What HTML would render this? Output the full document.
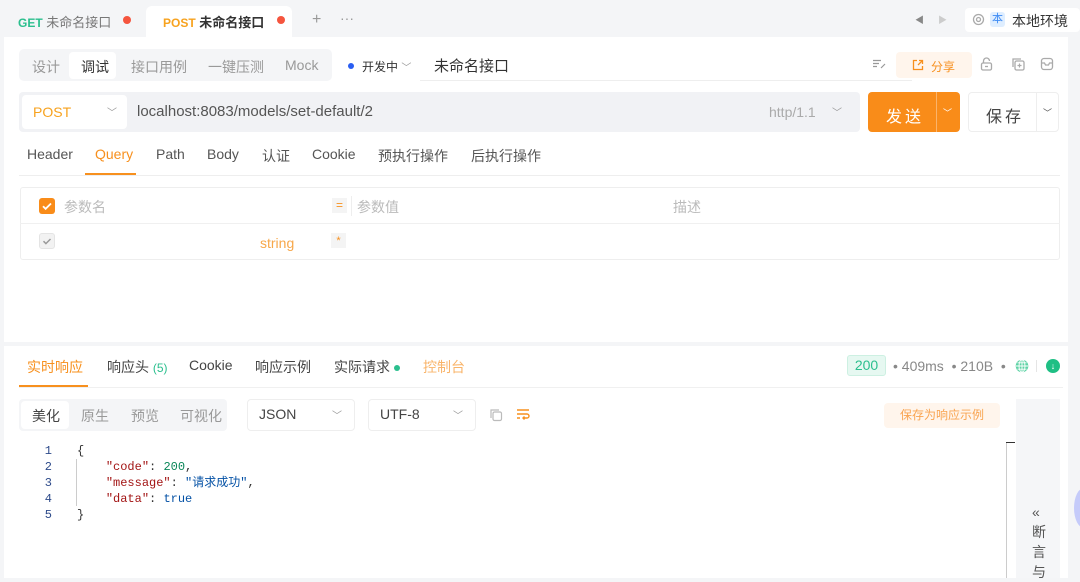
<!DOCTYPE html>
<html><head><meta charset="utf-8"><style>
*{box-sizing:border-box;margin:0;padding:0}
body{width:1080px;height:578px;overflow:hidden;background:#f4f5f7;font-family:"Liberation Sans","Noto Sans CJK SC",sans-serif;font-size:14px;color:#333;position:relative}
.a{position:absolute;white-space:nowrap}
.g{color:#999}
.o{color:#f7901e}
</style></head><body>
<!-- top tabs -->
<div class="a" style="left:18px;top:12px;font-size:13px"><b style="color:#2bbf8e;font-size:12px">GET</b> <span style="color:#777">未命名接口</span></div>
<div class="a" style="left:123px;top:16px;width:8px;height:8px;border-radius:50%;background:#f5553e"></div>
<div class="a" style="left:146px;top:6px;width:146px;height:31px;background:#fff;border-radius:6px 6px 0 0"></div>
<div class="a" style="left:163px;top:12px;font-size:13px"><b style="color:#f7a21e;font-size:12px">POST</b> <b style="color:#333">未命名接口</b></div>
<div class="a" style="left:277px;top:16px;width:8px;height:8px;border-radius:50%;background:#f5553e"></div>
<div class="a g" style="left:312px;top:11px;font-size:16px">+</div>
<div class="a g" style="left:340px;top:10px">···</div>
<div class="a" style="left:915px;top:13px;font-size:9px;color:#888">◀</div>
<div class="a" style="left:938px;top:13px;font-size:9px;color:#ccc">▶</div>
<div class="a" style="left:965px;top:8px;width:115px;height:24px;background:#fff;border-radius:4px"></div>
<svg class="a" style="left:972px;top:13px" width="13" height="13" viewBox="0 0 13 13"><circle cx="6.5" cy="6.5" r="5" fill="none" stroke="#aaa" stroke-width="1.3"/><circle cx="6.5" cy="6.5" r="2" fill="none" stroke="#aaa" stroke-width="1.3"/></svg>
<div class="a" style="left:990px;top:12px;font-size:11px;background:#dfeeff;color:#3d8bf5;padding:0 2px;border-radius:3px;line-height:15px">本</div>
<div class="a" style="left:1012px;top:11px;font-size:14px;color:#333">本地环境</div>
<!-- main panel -->
<div class="a" style="left:4px;top:37px;width:1064px;height:305px;background:#fff"></div>
<div class="a" style="left:4px;top:346px;width:1064px;height:232px;background:#fff"></div>
<!-- mode tabs -->
<div class="a" style="left:19px;top:49px;width:313px;height:32px;background:#f4f5f7;border-radius:5px"></div>
<div class="a" style="left:69px;top:52px;width:47px;height:27px;background:#fff;border-radius:4px"></div>
<div class="a g" style="left:32px;top:57px">设计</div>
<div class="a" style="left:81px;top:57px;color:#333">调试</div>
<div class="a g" style="left:131px;top:57px">接口用例</div>
<div class="a g" style="left:208px;top:57px">一键压测</div>
<div class="a g" style="left:285px;top:57px">Mock</div>
<div class="a" style="left:348px;top:63px;width:6px;height:6px;border-radius:50%;background:#2a5ef2"></div>
<div class="a" style="left:362px;top:58px;font-size:12px">开发中 <span class="g" style="font-size:10px">﹀</span></div>
<div class="a" style="left:434px;top:55px;font-size:15px">未命名接口</div>
<div class="a" style="left:420px;top:80px;width:492px;height:1px;background:#eee"></div>
<svg class="a" style="left:872px;top:59px" width="14" height="10" viewBox="0 0 14 10"><path d="M1 1.5h8M1 4.5h6M1 7.5h4M9 9l4-4" stroke="#999" stroke-width="1.2" fill="none"/></svg>
<div class="a" style="left:896px;top:52px;width:76px;height:26px;background:#fff5ec;border-radius:4px"></div>
<svg class="a" style="left:912px;top:59px" width="12" height="12" viewBox="0 0 12 12"><path d="M5 1.5H1.5v9h9V7M7 1.5h3.5V5M10.5 1.5L6 6" stroke="#f7901e" stroke-width="1.3" fill="none"/></svg>
<div class="a" style="left:931px;top:58px;color:#f7901e;font-size:12px">分享</div>
<svg class="a" style="left:980px;top:57px" width="13" height="14" viewBox="0 0 13 14"><path d="M3.5 6V4a3 3 0 0 1 6 0" stroke="#aaa" stroke-width="1.3" fill="none"/><rect x="1.5" y="6" width="10" height="7" rx="1.5" stroke="#aaa" stroke-width="1.3" fill="none"/><path d="M5 9.5h3" stroke="#aaa" stroke-width="1.3"/></svg>
<svg class="a" style="left:1011px;top:57px" width="14" height="14" viewBox="0 0 14 14"><path d="M2 10V2h8" stroke="#aaa" stroke-width="1.3" fill="none"/><rect x="4" y="4" width="9" height="9" rx="1.5" stroke="#aaa" stroke-width="1.3" fill="none"/><path d="M8.5 6.5v4M6.5 8.5h4" stroke="#aaa" stroke-width="1.2"/></svg>
<svg class="a" style="left:1040px;top:57px" width="14" height="14" viewBox="0 0 14 14"><rect x="1.5" y="1.5" width="11" height="11" rx="2.5" stroke="#aaa" stroke-width="1.3" fill="none"/><path d="M1.5 6h3l1 2h3l1-2h3" stroke="#aaa" stroke-width="1.3" fill="none"/></svg>
<!-- url bar -->
<div class="a" style="left:19px;top:92px;width:841px;height:40px;background:#f1f2f5;border-radius:4px"></div>
<div class="a" style="left:22px;top:95px;width:105px;height:34px;background:#fff;border-radius:4px"></div>
<div class="a" style="left:33px;top:104px;color:#f7a21e;font-size:14px">POST</div>
<div class="a g" style="left:107px;top:104px;font-size:10px">﹀</div>
<div class="a" style="left:137px;top:103px;font-size:15px;color:#555">localhost:8083/models/set-default/2</div>
<div class="a" style="left:769px;top:104px;font-size:14px;color:#aaa">http/1.1</div>
<div class="a g" style="left:832px;top:104px;font-size:10px">﹀</div>
<div class="a" style="left:868px;top:92px;width:92px;height:40px;background:#f98c19;border-radius:4px"></div>
<div class="a" style="left:936px;top:92px;width:1px;height:40px;background:#fbb36a"></div>
<div class="a" style="left:886px;top:103px;color:#fff;font-size:16px;letter-spacing:3px">发送</div>
<div class="a" style="left:943px;top:106px;color:#fff;font-size:9px">﹀</div>
<div class="a" style="left:968px;top:92px;width:91px;height:40px;background:#fff;border:1px solid #eee;border-radius:4px"></div>
<div class="a" style="left:1036px;top:93px;width:1px;height:38px;background:#eee"></div>
<div class="a" style="left:986px;top:103px;font-size:16px;letter-spacing:3px;color:#444">保存</div>
<div class="a" style="left:1043px;top:106px;color:#555;font-size:9px">﹀</div>
<!-- param tabs -->
<div class="a" style="left:27px;top:146px;color:#555">Header</div>
<div class="a o" style="left:95px;top:146px">Query</div>
<div class="a" style="left:85px;top:173px;width:51px;height:2px;background:#f7901e"></div>
<div class="a" style="left:156px;top:146px;color:#555">Path</div>
<div class="a" style="left:207px;top:146px;color:#555">Body</div>
<div class="a" style="left:262px;top:146px;color:#555">认证</div>
<div class="a" style="left:312px;top:146px;color:#555">Cookie</div>
<div class="a" style="left:378px;top:146px;color:#555">预执行操作</div>
<div class="a" style="left:471px;top:146px;color:#555">后执行操作</div>
<div class="a" style="left:19px;top:175px;width:1041px;height:1px;background:#eee"></div>
<!-- table -->
<div class="a" style="left:20px;top:187px;width:1040px;height:73px;border:1px solid #eee;border-radius:3px"></div>
<div class="a" style="left:20px;top:223px;width:1040px;height:1px;background:#f0f0f0"></div>
<div class="a" style="left:39px;top:198px;width:16px;height:16px;background:#f98c19;border-radius:3px"></div>
<svg class="a" style="left:39px;top:198px" width="16" height="16" viewBox="0 0 16 16"><path d="M4 8.2l2.6 2.6L12 5.5" stroke="#fff" stroke-width="1.8" fill="none"/></svg>
<div class="a" style="left:64px;top:197px;color:#bbb">参数名</div>
<div class="a" style="left:332px;top:198px;width:15px;height:15px;background:#f4f4f4;color:#f7901e;font-size:12px;text-align:center;line-height:15px">=</div>
<div class="a" style="left:351px;top:196px;width:1px;height:20px;background:#eee"></div>
<div class="a" style="left:357px;top:197px;color:#bbb">参数值</div>
<div class="a" style="left:673px;top:197px;color:#bbb">描述</div>
<div class="a" style="left:39px;top:233px;width:16px;height:16px;background:#f2f2f2;border:1px solid #e4e4e4;border-radius:3px"></div>
<svg class="a" style="left:39px;top:233px" width="16" height="16" viewBox="0 0 16 16"><path d="M4.5 8.2l2.4 2.4L11.5 6" stroke="#999" stroke-width="1.5" fill="none"/></svg>
<div class="a" style="left:260px;top:235px;color:#f7a74a">string</div>
<div class="a" style="left:331px;top:233px;width:15px;height:15px;background:#f4f4f4;color:#f7901e;font-size:11px;text-align:center;line-height:17px">*</div>
<!-- response tabs -->
<div class="a" style="left:27px;top:357px;color:#f7901e">实时响应</div>
<div class="a" style="left:19px;top:385px;width:69px;height:2px;background:#f7901e"></div>
<div class="a" style="left:107px;top:357px;color:#444">响应头 <span style="color:#2bbf8e;font-size:12px">(5)</span></div>
<div class="a" style="left:189px;top:357px;color:#444">Cookie</div>
<div class="a" style="left:255px;top:357px;color:#444">响应示例</div>
<div class="a" style="left:334px;top:357px;color:#444">实际请求</div>
<div class="a" style="left:394px;top:365px;width:6px;height:6px;border-radius:50%;background:#2bbf8e"></div>
<div class="a" style="left:423px;top:357px;color:#f9b46a">控制台</div>
<div class="a" style="left:19px;top:387px;width:1044px;height:1px;background:#f0f0f0"></div>
<div class="a" style="left:847px;top:355px;width:39px;height:21px;background:#e6f8f1;border:1px solid #cdf0e2;border-radius:3px;color:#2bbf8e;text-align:center;line-height:19px">200</div>
<div class="a" style="left:893px;top:358px;color:#888">• 409ms &nbsp;• 210B &nbsp;•</div>
<svg class="a" style="left:1015px;top:359px" width="14" height="14" viewBox="0 0 14 14"><circle cx="7" cy="7" r="6.3" fill="#5fd3a6"/><path d="M1 7h12M7 1v12M2.5 3.8h9M2.5 10.2h9" stroke="#fff" stroke-width="0.9"/><ellipse cx="7" cy="7" rx="3" ry="6.3" fill="none" stroke="#fff" stroke-width="0.9"/></svg>
<div class="a" style="left:1036px;top:360px;width:1px;height:12px;background:#e5e5e5"></div>
<div class="a" style="left:1046px;top:359px;width:14px;height:14px;border-radius:50%;background:#1fbf84;color:#fff;font-size:9px;text-align:center;line-height:14px">↓</div>
<!-- format bar -->
<div class="a" style="left:19px;top:399px;width:208px;height:32px;background:#f4f5f7;border-radius:4px"></div>
<div class="a" style="left:21px;top:401px;width:48px;height:28px;background:#fff;border-radius:4px"></div>
<div class="a" style="left:32px;top:406px;color:#444">美化</div>
<div class="a g" style="left:81px;top:406px">原生</div>
<div class="a g" style="left:131px;top:406px">预览</div>
<div class="a g" style="left:180px;top:406px">可视化</div>
<div class="a" style="left:247px;top:399px;width:108px;height:32px;border:1px solid #eee;border-radius:4px"></div>
<div class="a" style="left:259px;top:406px;color:#444">JSON</div>
<div class="a g" style="left:332px;top:407px;font-size:10px">﹀</div>
<div class="a" style="left:368px;top:399px;width:108px;height:32px;border:1px solid #eee;border-radius:4px"></div>
<div class="a" style="left:380px;top:406px;color:#444">UTF-8</div>
<div class="a g" style="left:453px;top:407px;font-size:10px">﹀</div>
<svg class="a" style="left:489px;top:408px" width="14" height="14" viewBox="0 0 14 14"><path d="M2 10V2h8" stroke="#bbb" stroke-width="1.2" fill="none"/><rect x="4" y="4" width="8.5" height="8.5" rx="1.5" stroke="#bbb" stroke-width="1.2" fill="none"/></svg>
<svg class="a" style="left:516px;top:408px" width="14" height="13" viewBox="0 0 14 13"><path d="M1 2h12M1 6h10a2 2 0 0 1 0 4H7M1 10h3M8.5 8.5L7 10l1.5 1.5" stroke="#f7901e" stroke-width="1.4" fill="none"/></svg>
<div class="a" style="left:884px;top:403px;width:116px;height:25px;background:#fff5ec;border-radius:4px;color:#f9a450;font-size:12px;text-align:center;line-height:25px">保存为响应示例</div>
<!-- code -->
<div class="a" style="left:40px;top:443px;font-family:'Liberation Mono',monospace;font-size:12px;line-height:16px;color:#2d4a8a;text-align:right;width:12px">1<br>2<br>3<br>4<br>5</div>
<div class="a" style="left:76px;top:459px;width:1px;height:47px;background:#ccc"></div>
<div class="a" style="left:77px;top:443px;font-family:'Liberation Mono','Noto Sans CJK SC',monospace;font-size:12px;line-height:16px;color:#333;white-space:pre">{
    <span style="color:#a31515">"code"</span>: <span style="color:#098658">200</span>,
    <span style="color:#a31515">"message"</span>: <span style="color:#0451a5">"请求成功"</span>,
    <span style="color:#a31515">"data"</span>: <span style="color:#0451a5">true</span>
}</div>
<!-- right sidebar -->
<div class="a" style="left:1006px;top:442px;width:9px;height:1px;background:#333"></div>
<div class="a" style="left:1006px;top:443px;width:1px;height:135px;background:#ccc"></div>
<div class="a" style="left:1016px;top:399px;width:44px;height:179px;background:#f5f6f8"></div>
<div class="a" style="left:1032px;top:502px;color:#555;font-size:14px;line-height:20px;white-space:normal;width:16px">«<br>断<br>言<br>与</div>
<div class="a" style="left:1074px;top:488px;width:20px;height:40px;border-radius:50%;background:#c5cbfa"></div>
</body></html>
